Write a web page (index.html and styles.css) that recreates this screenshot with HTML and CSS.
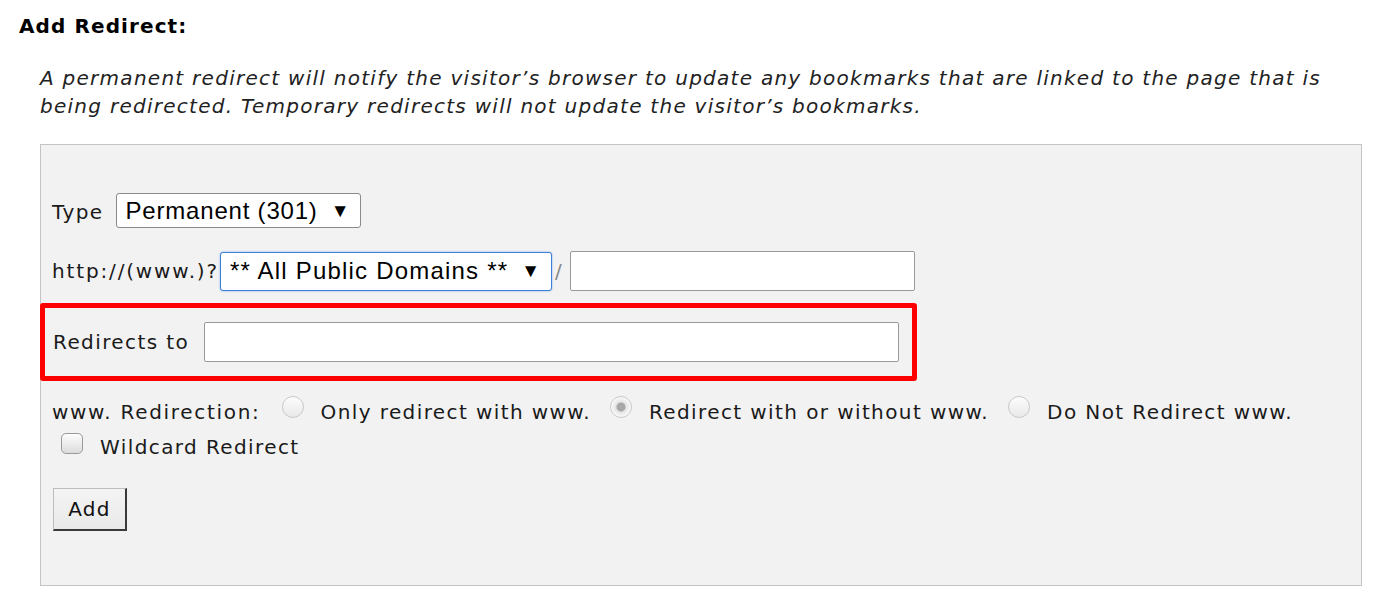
FILE: index.html
```html
<!DOCTYPE html>
<html lang="en">
<head>
    <meta charset="UTF-8">
    <title>Add Redirect</title>
    <link rel="stylesheet" href="styles.css">
</head>
<body>
    <h2 class="title">Add Redirect:</h2>
    <p class="note">A permanent redirect will notify the visitor’s browser to update any bookmarks that are linked to the page that is being redirected. Temporary redirects will not update the visitor’s bookmarks.</p>

    <div class="panel">
        <!-- redirect type -->
        <div class="row row-type">
            <label for="type">Type</label>
            <div class="select select-type">Permanent (301)<span class="arrow">▼</span></div>
        </div>

        <!-- source domain + path -->
        <div class="row row-domain">
            <span class="proto">http://(www.)?</span>
            <div class="select select-domain">** All Public Domains **<span class="arrow">▼</span></div>
            <span class="slash">/</span>
            <input type="text" class="field field-path">
        </div>

        <!-- highlighted target -->
        <div class="highlight">
            <label for="target">Redirects to</label>
            <input type="text" id="target" class="field field-target">
        </div>

        <div class="row row-www">
            <span class="www-label">www. Redirection:</span>
            <label class="opt"><input type="radio" name="www"> Only redirect with www.</label>
            <label class="opt"><input type="radio" name="www" checked> Redirect with or without www.</label>
            <label class="opt"><input type="radio" name="www"> Do Not Redirect www.</label>
        </div>

        <div class="row row-wild">
            <label class="opt"><input type="checkbox"> Wildcard Redirect</label>
        </div>

        <button class="add-btn">Add</button>
    </div>
</body>
</html>
```

FILE: styles.css
```css
body {
    margin: 0;
    padding: 14px 19px 0 19px;
    font-family: "DejaVu Sans", Verdana, sans-serif;
    font-size: 20px;
    letter-spacing: 1.4px;
    color: #1a1a1a;
    background: #fff;
}

.title {
    margin: 0;
    font-size: 20px;
    font-weight: bold;
    letter-spacing: 1.1px;
    line-height: 24px;
    color: #000;
}

.note {
    margin: 26px 0 0 21px;
    font-style: italic;
    letter-spacing: 1.27px;
    line-height: 28px;
    color: #222;
}

/* Grey form panel */
.panel {
    box-sizing: border-box;
    margin: 24px 0 0 21px;
    width: 1322px;
    height: 442px;
    padding: 48px 0 0 11px;
    background: #f2f2f2;
    border: 1px solid #c4c4c4;
}

.row {
    display: flex;
    align-items: center;
}

.row-type label {
    margin-right: 12px;
    margin-top: 2px;
}

.select {
    position: relative;
    box-sizing: border-box;
    background: #fff;
    border: 1px solid #8a8a8a;
    border-radius: 3px;
    font-family: "Liberation Sans", Arial, sans-serif;
    font-size: 24px;
    color: #000;
    padding-left: 9px;
    display: flex;
    align-items: center;
}

    .select .arrow {
        position: absolute;
        right: 10px;
        font-size: 19px;
        letter-spacing: 0;
    }

.select-type {
    width: 245px;
    height: 35px;
    letter-spacing: 0.8px;
}

.row-domain {
    margin-top: 23px;
}

.proto {
    letter-spacing: 1.85px;
}

.select-domain {
    width: 332px;
    height: 39px;
    letter-spacing: 1.2px;
    border: 1px solid #3c7fd6;
    box-shadow: 0 0 2px #7aa7e6;
    margin-left: 1px;
}

    .select-domain .arrow {
        right: 11px;
    }

.slash {
    margin: 0 7px 0 3px;
    color: #888;
}

.field {
    box-sizing: border-box;
    background: #fff;
    border: 1px solid #999;
    border-radius: 2px;
    height: 40px;
    margin: 0;
}

.field-path {
    width: 345px;
}

/* Red emphasis box */
.highlight {
    display: flex;
    align-items: center;
    box-sizing: border-box;
    width: 877px;
    height: 78px;
    margin: 12px 0 0 -12px;
    padding-left: 8px;
    border: 5px solid #f00;
    border-radius: 3px;
}

    .highlight label {
        margin-right: 15px;
    }

.field-target {
    width: 695px;
}

.row-www {
    margin-top: 13px;
    height: 36px;
}

.www-label {
    margin-right: 21px;
    letter-spacing: 1.7px;
}

.opt {
    display: flex;
    align-items: center;
    margin-right: 19px;
}

    .opt input {
        appearance: none;
        margin: -10px 17px 0 0;
        width: 22px;
        height: 22px;
        border: 1px solid #c9c9c9;
        background: linear-gradient(#fdfdfd, #e8e8e8);
    }

    .opt input[type=radio] {
        border-radius: 50%;
    }

        .opt input[type=radio]:checked {
            background: radial-gradient(circle, #a8a8a8 0 4px, #e4e4e4 5px, #fafafa 10px);
        }

    .opt input[type=checkbox] {
        margin: -7px 17px 0 9px;
        width: 22px;
        height: 21px;
        border-radius: 5px;
        border-color: #9a9a9a;
        background: linear-gradient(#fdfdfd, #dcdcdc);
    }

.row-wild {
    height: 36px;
    margin-top: -1px;
}

.add-btn {
    margin-top: 23px;
    margin-left: 1px;
    width: 74px;
    height: 43px;
    font-family: "DejaVu Sans", Verdana, sans-serif;
    font-size: 20px;
    letter-spacing: 1.2px;
    color: #111;
    background: linear-gradient(#f4f4f4, #e9e9e9);
    border: 1px solid #bdbdbd;
    border-right: 2px solid #3a3a3a;
    border-bottom: 2px solid #3a3a3a;
    border-radius: 0;
}
```
